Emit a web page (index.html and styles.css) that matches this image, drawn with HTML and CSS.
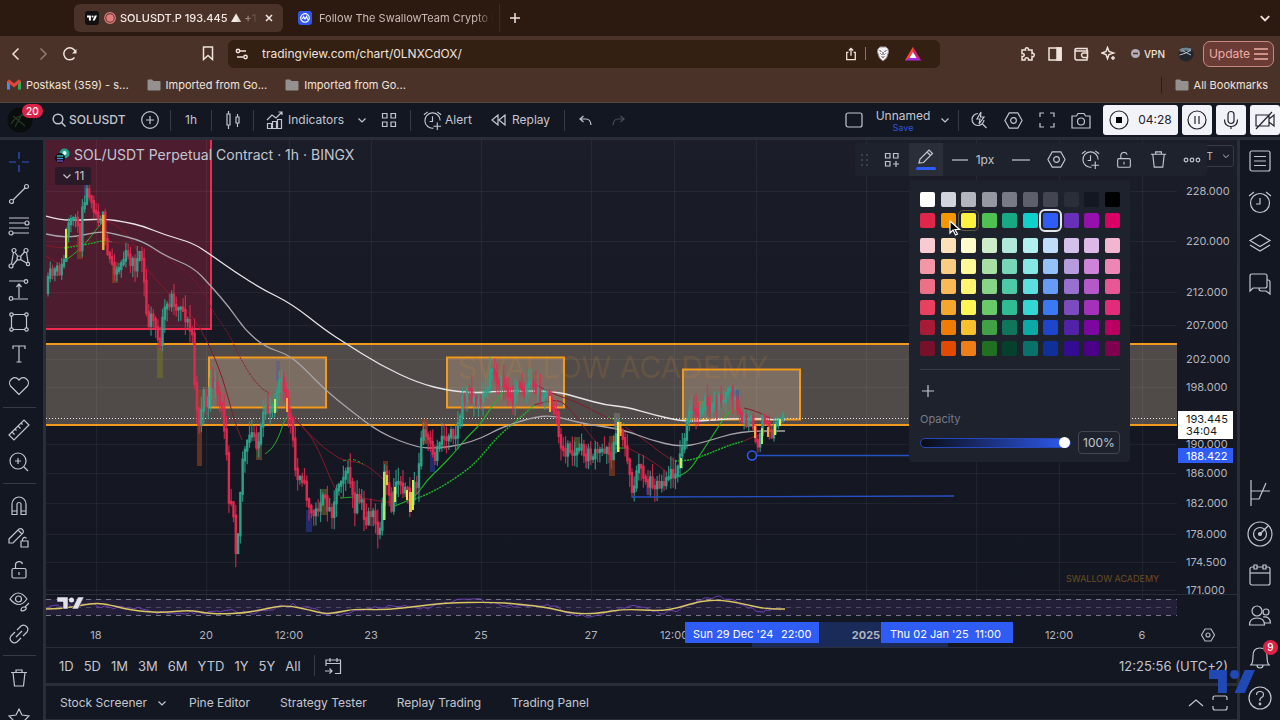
FILE: index.html
```html
<!DOCTYPE html>
<html lang="en">
<head>
<meta charset="utf-8">
<title>SOLUSDT.P 193.445</title>
<link rel="stylesheet" href="styles.css">
</head>
<body>
<svg class="defs" aria-hidden="true">
  <symbol id="chev" viewBox="0 0 10 10"><path d="M1.500 3.500 5 7l3.500-3.500"/></symbol>
  <symbol id="hex" viewBox="0 0 22 22"><path d="M6.500 3h9l4.500 8-4.500 8h-9L2 11z"/><circle cx="11" cy="11" r="3"/></symbol>
  <symbol id="trash" viewBox="0 0 22 22"><path d="M3 5.500h16M8 5.500V3h6v2.500M5 5.500 6.500 19h9L17 5.500"/></symbol>
  <symbol id="lock" viewBox="0 0 22 22"><rect x="4" y="9.500" width="14" height="9.500" rx="1.500"/><path d="M7.500 9.500V6c0-4 6-4.500 7-1M11 13v3"/></symbol>
  <symbol id="alarm" viewBox="0 0 22 22"><path d="M19 11a8 8 0 1 0-7 8M11 6.500V12H8M2 5l4-3M16 2l4 3M16 13v8M12 17h8"/></symbol>
  <symbol id="folder" viewBox="0 0 14 12"><path d="M.5 1.500q0-1 1-1h3.500l1.500 1.500h6q1 0 1 1v7.500q0 1-1 1h-11q-1 0-1-1z" fill="#93908f" stroke="none"/></symbol>
  <symbol id="tv" viewBox="0 0 36 18"><path d="M0 0h14v18H7V7H0zM28 0h8l-8 18h-8z"/><circle cx="20" cy="3.500" r="3.500"/></symbol>
</svg>

<header class="browser">
  <div class="tabs">
    <div class="tab active">
      <span class="fav tvfav"><svg class="solid" width="10" height="6"><use href="#tv"/></svg></span>
      <svg width="12" height="12" viewBox="0 0 12 12" class="rec"><circle cx="6" cy="6" r="5.300"/><circle cx="6" cy="6" r="3.200" fill="#e07c7c"/></svg>
      <span class="tabtext">SOLUSDT.P 193.445 ▲ +1</span>
      <button class="close" aria-label="Close tab"><svg width="8" height="8" viewBox="0 0 8 8"><path d="m1 1 6 6M7 1 1 7"/></svg></button>
    </div>
    <div class="tab">
      <span class="fav cmc"><svg width="10" height="10" viewBox="0 0 10 10"><path d="M9 6.500A4.300 4.300 0 1 1 9.300 5q0 2-1.200 1.500Q7 6 6.700 3.500L5 6 3.500 3.500 2.500 6"/></svg></span>
      <span class="tabtext">Follow The SwallowTeam Crypto N</span>
    </div>
    <button class="newtab" aria-label="New tab"><svg width="10" height="10" viewBox="0 0 10 10"><path d="M5 0v10M0 5h10"/></svg></button>
    <button class="tabmenu" aria-label="Search tabs"><svg width="12" height="12"><use href="#chev"/></svg></button>
  </div>
  <div class="nav">
    <button aria-label="Back"><svg width="14" height="14" viewBox="0 0 14 14"><path d="M9.500 1.500 4 7l5.500 5.500"/></svg></button>
    <button aria-label="Forward" class="dim"><svg width="14" height="14" viewBox="0 0 14 14"><path d="M4.500 1.500 10 7l-5.500 5.500"/></svg></button>
    <button aria-label="Reload"><svg width="16" height="16" viewBox="0 0 16 16"><path d="M12.500 11.500A6 6 0 1 1 13.500 6"/><path d="M14.500 3v4.500H10z" fill="currentColor" stroke="none"/></svg></button>
    <button aria-label="Bookmark" class="mark"><svg width="12" height="15" viewBox="0 0 12 15"><path d="M1.500 1h9v12.500L6 9.500l-4.500 4z"/></svg></button>
    <label class="url">
      <svg width="14" height="12" viewBox="0 0 14 12"><circle cx="3" cy="3" r="1.700"/><path d="M5 3h6M2 9h6"/><circle cx="10.500" cy="9" r="1.700"/></svg>
      <input type="text" value="tradingview.com/chart/0LNXCdOX/" aria-label="Address">
      <svg width="12" height="14" viewBox="0 0 14 16"><path d="M4 6H2v8.500h10V6h-2M7 10V1.500M4.500 4 7 1.500 9.500 4"/></svg>
      <i></i>
      <svg width="14" height="16" viewBox="0 0 14 16"><path d="m2 3 2-2h6l2 2 .5 3-2 6L7 15l-3.500-3-2-6z" fill="#f4f2f5" stroke="#99939a" stroke-width="1"/><path d="m3.500 4.500 2 1M10.500 4.500l-2 1M5.500 10.500l1.500 1 1.500-1M7 6v3M4.500 7.500l1 1M9.500 7.500l-1 1" stroke="#3a3040" stroke-width=".9"/></svg>
      <svg class="bat" width="18" height="16" viewBox="0 0 18 16"><path d="M9 1 1 14.500h16z" fill="#a52be0" stroke="none"/><path d="M9 1 1 14.500l4-2.500 4-6z" fill="#ff4a1c" stroke="none"/><path d="m9 1 8 13.500-4-2.500-4-6z" fill="#d22368" stroke="none"/><path d="m9 6-3.500 6h7z" fill="#fff" stroke="none"/></svg>
    </label>
    <button aria-label="Extensions" class="ext"><svg width="16" height="16" viewBox="0 0 16 16"><path d="M2 4h3.500C4.500 1 9 1 8.500 4H12v3.500c3-1 3 4 0 3V14H8.500c.5-3-4-3-3.500 0H2v-3.500c3 .5 3-3.500 0-3z"/></svg></button>
    <button aria-label="Sidebar"><svg width="14" height="14" viewBox="0 0 14 14"><path d="M1 1h12v12H1z"/><path d="M9 1h4v12H9z" fill="currentColor"/></svg></button>
    <button aria-label="Wallet"><svg width="15" height="14" viewBox="0 0 15 14"><path d="M13 4V1.500H3Q1 1.500 1 3v8q0 2 2 2h10v-2.500M1 4h12.500v6.500H9q-3-3 0-4.500h4.500"/></svg></button>
    <button aria-label="Assistant"><svg width="15" height="15" viewBox="0 0 15 15"><path d="M6.500 1.500 8 5.500l4.500 1.500L8 8.500l-1.500 4-1.500-4L1 7l4-1.500zM12 10v4M10 12h4"/></svg></button>
    <button class="vpn"><svg width="9" height="9" viewBox="0 0 9 9"><circle cx="4.500" cy="4.500" r="4.500" fill="#b4acb8" stroke="none"/><path d="M2 4.500h5" stroke="#4b3228"/></svg>VPN</button>
    <svg class="face" width="16" height="16" viewBox="0 0 16 16"><circle cx="8" cy="8" r="7.500" fill="#22252c" stroke="none"/><path d="M2 5q4-3.500 11-1" stroke="#6c8392" stroke-width="3"/><path d="M1.500 9q6-1 11.500-5M4 4.500l9 4.500" stroke="#b6c2ca" stroke-width="1"/></svg>
    <button class="update">Update <svg width="14" height="12" viewBox="0 0 14 12"><path d="M0 1h14M0 6h14M0 11h14"/></svg></button>
  </div>
  <div class="bookmarks">
    <a href="#"><svg width="14" height="11" viewBox="0 0 14 11"><path d="M1.500 10.500V2" stroke="#4c8bf5" stroke-width="3"/><path d="M12.500 10.500V2" stroke="#34a853" stroke-width="3"/><path d="m1 1.500 6 5 6-5" stroke="#ea4335" stroke-width="3"/></svg>Postkast (359) - s...</a>
    <a href="#"><svg width="14" height="12"><use href="#folder"/></svg>Imported from Go...</a>
    <a href="#"><svg width="14" height="12"><use href="#folder"/></svg>Imported from Go...</a>
    <a href="#" class="all"><svg width="14" height="12"><use href="#folder"/></svg>All Bookmarks</a>
  </div>
</header>

<div class="app">
  <div class="topbar">
    <button class="avatar" aria-label="Account, 20 notifications"><svg width="26" height="26" viewBox="0 0 26 26"><circle cx="13" cy="13" r="12.500" fill="#090d0c" stroke="none"/><path d="M4 17q5-9 16-9M6 9l12 10M8 20l7-13" stroke="#273c25"/></svg><b>20</b></button>
    <button class="symbol"><svg width="14" height="14" viewBox="0 0 14 14"><circle cx="6" cy="6" r="4.800"/><path d="m9.500 9.500 4 4"/></svg><span>SOLUSDT</span></button>
    <button class="w41" aria-label="Compare"><svg width="18" height="18" viewBox="0 0 18 18"><circle cx="9" cy="9" r="8.300"/><path d="M9 5v8M5 9h8"/></svg></button>
    <i class="sep"></i>
    <button class="w40">1h</button>
    <i class="sep"></i>
    <button class="w41" aria-label="Candles"><svg width="16" height="20" viewBox="0 0 16 20"><path d="M2 4h3v11H2zM3.500 1v3M3.500 15v4M11 7h3v6h-3zM12.500 4v3M12.500 13v4"/></svg></button>
    <i class="sep"></i>
    <button class="indicators"><svg width="18" height="18" viewBox="0 0 18 18"><path d="M1.500 17.500v-5h4v5zm5 0v-7h4v7zm5 0v-9h4v9zM1 9l5-5 4 3 6-6M12.500 1H16v3"/></svg>Indicators</button>
    <button class="w24" aria-label="Favorite indicators"><svg width="10" height="10"><use href="#chev"/></svg></button>
    <button class="w30" aria-label="Templates"><svg width="16" height="16" viewBox="0 0 16 16"><path d="M1.500 1.500h4.500v4.500H1.500zM10 1.500h4.500v4.500H10zM1.500 10h4.500v4.500H1.500zM10 10h4.500v4.500H10z"/></svg></button>
    <i class="sep gapsep"></i>
    <button class="alert"><svg width="21" height="21"><use href="#alarm"/></svg>Alert</button>
    <button class="replay"><svg width="15" height="12" viewBox="0 0 15 12"><path d="M7 1v10L1 6zM14 1v10L8 6z"/></svg>Replay</button>
    <i class="sep"></i>
    <button class="w41" aria-label="Undo"><svg width="13" height="11" viewBox="0 0 13 11"><path d="M4.500 1 1 4l3.500 3M1 4h6q4.500 0 5 6"/></svg></button>
    <button class="w24 faint" aria-label="Redo"><svg width="13" height="11" viewBox="0 0 13 11"><path d="M8.500 1 12 4 8.500 7M12 4H6Q1.500 4 1 10"/></svg></button>
    <div class="right">
      <button class="w34" aria-label="Layout"><svg width="18" height="16" viewBox="0 0 18 16"><rect x="1" y="1" width="16" height="14" rx="2"/></svg></button>
      <button class="layout"><span>Unnamed</span><small>Save</small></button>
      <button class="w20" aria-label="Layouts"><svg width="10" height="10"><use href="#chev"/></svg></button>
      <i class="sep m3"></i>
      <button class="w34" aria-label="Quick search"><svg width="18" height="18" viewBox="0 0 18 18"><path d="M8 2.500a6 6 0 1 0 6 6.500M12.500 13l4 4M11 1 7 8h3l-1 5 5-7h-3.500z"/></svg></button>
      <button class="w34" aria-label="Settings"><svg width="21" height="21"><use href="#hex"/></svg></button>
      <button class="w34" aria-label="Fullscreen"><svg width="16" height="16" viewBox="0 0 16 16"><path d="M1 5V1h4M11 1h4v4M15 11v4h-4M5 15H1v-4"/></svg></button>
      <button class="w34" aria-label="Snapshot"><svg width="20" height="17" viewBox="0 0 20 17"><path d="M1 4h4.500L7 1.500h6L14.500 4H19v12H1z"/><circle cx="10" cy="9.500" r="3.500"/></svg></button>
      <div class="recorder">
        <button class="r1"><svg width="20" height="20" viewBox="0 0 20 20"><circle cx="10" cy="10" r="9"/><path d="M7 7h6v6H7z" fill="#000" stroke="none"/></svg>04:28</button>
        <button class="r2" aria-label="Pause"><svg width="20" height="20" viewBox="0 0 20 20"><circle cx="10" cy="10" r="9"/><path d="M8 6v8M12 6v8"/></svg></button>
        <button class="r2" aria-label="Microphone"><svg width="18" height="20" viewBox="0 0 18 20"><rect x="6" y="1.500" width="6" height="12" rx="3"/><path d="M2.500 9.500q0 7 6.500 7t6.500-7M9 16.500V19"/></svg></button>
        <button class="r2" aria-label="Camera off"><svg width="20" height="20" viewBox="0 0 20 20"><path d="M1 5h13v11H1zM14 9l5-4v11l-5-4M1 19 17 2"/></svg></button>
      </div>
    </div>
  </div>

  <div class="main">
    <nav class="left" aria-label="Drawing tools">
      <button class="blue" aria-label="Cross"><svg width="22" height="22" viewBox="0 0 22 22"><path d="M11 1v7M11 14v7M1 11h7M14 11h7"/></svg></button>
      <button aria-label="Trend line"><svg width="22" height="22" viewBox="0 0 22 22"><circle cx="3.500" cy="18.500" r="2"/><circle cx="18.500" cy="3.500" r="2"/><path d="M5 17 17 5"/></svg></button>
      <button aria-label="Fibonacci"><svg width="22" height="22" viewBox="0 0 22 22"><path d="M1 3h20M1 8h16M1 13h20M5 18h16"/><circle cx="19" cy="8" r="2"/><circle cx="3" cy="18" r="2"/></svg></button>
      <button aria-label="Patterns"><svg width="22" height="22" viewBox="0 0 22 22"><path d="M3.500 17 5.500 5M7 5.500 10 9.500M12.500 9.500 16.500 5M18.500 5.500 20 15M5 18l4.500-5.500M12.500 12.500 18.500 16"/><circle cx="3" cy="19" r="2"/><circle cx="6" cy="3.500" r="2"/><circle cx="11" cy="11" r="2"/><circle cx="18" cy="3.500" r="2"/><circle cx="20" cy="17" r="1.700"/></svg></button>
      <button aria-label="Prediction"><svg width="22" height="22" viewBox="0 0 22 22"><path d="M1 2h15M5 20h15M11 19V5M8.500 8 11 5l2.500 3"/><circle cx="18" cy="2.500" r="1.800"/><circle cx="3" cy="19.500" r="1.800"/></svg></button>
      <button aria-label="Shapes"><svg width="22" height="22" viewBox="0 0 22 22"><path d="M3.500 5v12M18.500 5v12M5 3.500h12M5 18.500h12"/><circle cx="3.500" cy="3.500" r="1.700"/><circle cx="18.500" cy="3.500" r="1.700"/><circle cx="3.500" cy="18.500" r="1.700"/><circle cx="18.500" cy="18.500" r="1.700"/></svg></button>
      <button aria-label="Text"><svg width="22" height="22" viewBox="0 0 22 22"><path d="M5 6V3h12v3M11 3v16M8.500 19h5"/></svg></button>
      <button aria-label="Icons"><svg width="22" height="22" viewBox="0 0 22 22"><path d="M11 19.500 2.500 11C-1 6 6-.5 11 5c5-5.500 12 1 8.500 6z"/></svg></button>
      <i></i>
      <button aria-label="Measure"><svg width="22" height="22" viewBox="0 0 22 22"><path d="M1 16 16 1l5 5L6 21zM4 13l2.500 2.500M7 10l1.500 1.500M10 7l2.500 2.500M13 4l1.500 1.500"/></svg></button>
      <button aria-label="Zoom in"><svg width="22" height="22" viewBox="0 0 22 22"><circle cx="10" cy="10" r="8"/><path d="m16 16 4 4M10 7v6M7 10h6"/></svg></button>
      <i></i>
      <button aria-label="Magnet"><svg width="22" height="22" viewBox="0 0 22 22"><path d="M4 19.500V9a7 7 0 0 1 14 0v10.500h-5V9.500a2 2 0 0 0-4 0v10zM4 16h5M13 16h5"/></svg></button>
      <button aria-label="Stay in drawing mode"><svg width="22" height="22" viewBox="0 0 22 22"><path d="m1 12 10-10q2-1 3.500.5T15 6L5 16H1zM10 3l4 4M13 14h7v6h-7zM14.500 14v-2q2-3 4-.500"/></svg></button>
      <button aria-label="Lock drawings"><svg width="22" height="22"><use href="#lock"/></svg></button>
      <button aria-label="Hide drawings"><svg width="22" height="22" viewBox="0 0 22 22"><path d="M2 8q8-12 17 0-8 11-17 0zM13 20q0-4 3-4t2 2-5 2M17 16l4-4"/><circle cx="10.500" cy="8" r="3"/></svg></button>
      <button aria-label="Sync"><svg width="22" height="22" viewBox="0 0 22 22"><path d="m9 7 4-4q3-2 5.500.5T19 9l-4 4M13 15l-4 4q-3 2-5.500-.5T3 13l4-4M8 14l6-6"/></svg></button>
      <i></i>
      <button aria-label="Remove"><svg width="22" height="22"><use href="#trash"/></svg></button>
      <button class="star" aria-label="Favorites"><svg width="22" height="22" viewBox="0 0 22 22"><path d="m11 2 3 6 7 1-5 5 1 7-6-3-6 3 1-7-5-5 7-1z"/></svg></button>
    </nav>

    <main class="center">
      <section class="chartbox">
        <svg id="chart" viewBox="46 140 1191 507" preserveAspectRatio="none" role="img" aria-label="SOL/USDT price chart"></svg>
        <button class="currency">USDT <svg width="8" height="8"><use href="#chev"/></svg></button>
        <div class="legend">
          <h1><svg width="15" height="15" viewBox="0 0 15 15"><circle cx="9.500" cy="5.500" r="5" fill="#25a28b" stroke="none"/><circle cx="9.500" cy="5" r="2" fill="#e5fff7" stroke="none"/><circle cx="5" cy="10" r="5" fill="#11131d" stroke="none"/><path d="M2 8h6" stroke="#38d5b8"/><path d="M2 10.500h6" stroke="#4b8fe8"/><path d="M2 13h6" stroke="#8350d9"/></svg>SOL/USDT Perpetual Contract · 1h · BINGX</h1>
          <button><svg width="10" height="10"><use href="#chev"/></svg>11</button>
        </div>
        <div class="floatbar">
          <svg class="grip" width="10" height="14" viewBox="0 0 10 14"><path d="M1 2h2M6 2h2M1 7h2M6 7h2M1 12h2M6 12h2"/></svg>
          <button class="w34" aria-label="Templates"><svg width="16" height="16" viewBox="0 0 16 16"><path d="M1.500 1.500h4.500v4.500H1.500zM9.500 1.500H14v4.500H9.500zM1.500 9.500h4.500V14H1.500zM12 9v6M9 12h6"/></svg></button>
          <button class="w34 pen" aria-label="Line color"><svg width="18" height="16" viewBox="0 0 18 16"><path d="m2 14 1-4 9-9 3.500 3.500-9 9zM10 3l3.500 3.500"/></svg><b></b></button>
          <button class="px"><svg width="16" height="4" viewBox="0 0 16 4"><path d="M0 2h16"/></svg>1px</button>
          <button class="linestyle" aria-label="Line style"><svg width="18" height="4" viewBox="0 0 18 4"><path d="M0 2h18"/></svg></button>
          <button class="w34" aria-label="Settings"><svg width="21" height="21"><use href="#hex"/></svg></button>
          <button class="w34" aria-label="Add alert"><svg width="21" height="21"><use href="#alarm"/></svg></button>
          <button class="w34" aria-label="Lock"><svg width="20" height="20"><use href="#lock"/></svg></button>
          <button class="w34" aria-label="Remove"><svg width="21" height="21"><use href="#trash"/></svg></button>
          <button class="w34" aria-label="More"><svg width="18" height="6" viewBox="0 0 18 6"><circle cx="3" cy="3" r="1.800"/><circle cx="9" cy="3" r="1.800"/><circle cx="15" cy="3" r="1.800"/></svg></button>
        </div>
        <div class="picker">
          <div class="swatches two" id="base"></div>
          <div class="swatches six" id="shades"></div>
          <hr>
          <button class="add" aria-label="Add custom color"><svg width="12" height="12" viewBox="0 0 12 12"><path d="M6 0v12M0 6h12"/></svg></button>
          <label for="opacity">Opacity</label>
          <div class="oprow"><input type="range" id="opacity" value="100"><input type="text" value="100%" aria-label="Opacity percent"></div>
          <svg class="cursor" width="12" height="16" viewBox="0 0 12 16"><path d="M1 1v12l3-3 2.500 5 2-1L6 9.500h4.500z" fill="#000" stroke="#fff"/></svg>
        </div>
      </section>
      <section class="ranges">
        <button>1D</button><button>5D</button><button>1M</button><button>3M</button><button>6M</button><button>YTD</button><button>1Y</button><button>5Y</button><button>All</button>
        <i class="sep"></i>
        <button aria-label="Go to date"><svg width="18" height="18" viewBox="0 0 18 18"><path d="M2 9V3h14.500v13.500H11M2 6.500h14.500M6 1v4M13 1v4M1 14h7M5.500 11.500 8 14l-2.500 2.500"/></svg></button>
        <time>12:25:56 (UTC+2)</time>
      </section>
      <section class="panels">
        <button>Stock Screener <svg width="10" height="10"><use href="#chev"/></svg></button>
        <button>Pine Editor</button><button>Strategy Tester</button><button>Replay Trading</button><button>Trading Panel</button>
        <div class="panelctl">
          <button aria-label="Open panel"><svg width="16" height="8" viewBox="0 0 16 8"><path d="m1 7 7-6 7 6"/></svg></button>
          <button aria-label="Maximize panel"><svg width="16" height="16" viewBox="0 0 16 16"><path d="M1 5V3q0-2 2-2h2M11 1h2q2 0 2 2v2M15 11v2q0 2-2 2h-2M5 15H3q-2 0-2-2v-2M5 1h6M5 15h6"/></svg></button>
        </div>
      </section>
    </main>

    <aside class="side" aria-label="Widgets">
      <button aria-label="Watchlist"><svg width="24" height="24" viewBox="0 0 24 24"><rect x="2" y="2" width="20" height="20" rx="2"/><path d="M6 7.500h12M6 12h12M6 16.500h12"/></svg></button>
      <button aria-label="Alerts"><svg width="24" height="24" viewBox="0 0 24 24"><circle cx="12" cy="13" r="9.500"/><path d="M12 8v6H8M1 6l5-4M18 2l5 4"/></svg></button>
      <button aria-label="Object tree"><svg width="24" height="24" viewBox="0 0 24 24"><path d="m2 9.500 10-6 10 6-10 6zM2 14l10 6 10-6"/></svg></button>
      <button aria-label="Chats"><svg width="24" height="24" viewBox="0 0 24 24"><path d="M2 19V4q0-2 2-2h13q2 0 2 2v10q0 2-2 2H5zM19 8h1q2 0 2 2v12l-4-3h-5q-2 0-2-3"/></svg></button>
      <button class="push" aria-label="DOM"><svg width="24" height="28" viewBox="0 0 24 28"><path d="M3 1v26M3 12h19M3 20h8l7-16"/></svg></button>
      <button aria-label="Streams"><svg width="26" height="26" viewBox="0 0 26 26"><circle cx="13" cy="13" r="12"/><circle cx="13" cy="13" r="6.500"/><circle cx="13" cy="13" r="1.500" fill="currentColor"/><path d="m13 13 8-8"/></svg></button>
      <button aria-label="Calendar"><svg width="24" height="24" viewBox="0 0 24 24"><rect x="2" y="4" width="20" height="18" rx="2"/><path d="M2 10h20" /><path d="M6 2h3v4H6zM15 2h3v4h-3z" fill="#131722"/></svg></button>
      <button aria-label="Community"><svg width="24" height="24" viewBox="0 0 24 24"><circle cx="9" cy="7" r="5"/><path d="M1.500 21q0-7 7.500-7t7.500 7zM15 13q7-1 7.500 6H17"/><circle cx="18" cy="8" r="3"/></svg></button>
      <button class="bell" aria-label="Notifications, 9 new"><svg width="24" height="24" viewBox="0 0 24 24"><path d="M3 20q2-2 2-9 0-8 7-8t7 8q0 7 2 9zM2 20h20M9 20q0 3 3 3t3-3"/></svg><b>9</b></button>
      <button aria-label="Help"><svg width="24" height="24" viewBox="0 0 24 24"><circle cx="12" cy="12" r="11"/><path d="M8.500 9q0-3.500 3.500-3.500t3.500 3q0 2-2 3T12 15"/><circle cx="12" cy="18" r=".8"/></svg></button>
    </aside>
  </div>
  <svg class="brand" width="46" height="23"><use href="#tv"/></svg>
</div>
<script src="chart.js"></script>
</body>
</html>
```
FILE: styles.css
```css
* { box-sizing: border-box; }
body {
  margin: 0;
  height: 100vh;
  display: flex;
  flex-direction: column;
  overflow: hidden;
  background: #2a2e39;
  color: #c3c6d0;
  font: 12px/16px Inter, "Liberation Sans", sans-serif;
}
svg { fill: none; stroke: currentColor; stroke-width: 1.2; flex: none; }
.defs { position: absolute; width: 0; height: 0; }
.solid, .brand { fill: currentColor; stroke: none; }
button {
  border: 0;
  padding: 0;
  background: none;
  color: inherit;
  font: inherit;
  display: flex;
  align-items: center;
  justify-content: center;
  white-space: nowrap;
  flex: none;
}
input { font: inherit; color: inherit; border: 0; background: none; padding: 0; min-width: 0; }

/* Browser chrome */
.browser { background: #4b3228; color: #efe3dc; border-bottom: 1px solid #57463b; flex: none; }
.browser svg { stroke-width: 1.5; }
.tabs { display: flex; align-items: center; height: 36px; background: #2c1a10; padding-left: 74px; }
.tab { display: flex; align-items: center; height: 28px; padding-left: 14px; gap: 7px; color: #c9bbb3; font-size: 11px; width: 209px; }
.tab:not(.active) { margin-left: 1px; width: 216px; border-right: 1px solid #3d2a20; }
.tab.active { background: #4b3228; border-radius: 6px; padding-left: 11px; gap: 3px; color: #f3eae5; padding-right: 6px; font-weight: 500; }
.tabtext { flex: 1; overflow: hidden; white-space: nowrap; mask-image: linear-gradient(90deg, #000 84%, transparent); }
.tab:not(.active) .tabtext { margin-right: 2px; mask-image: linear-gradient(90deg, #000 88%, transparent 98%); }
.fav { width: 14px; height: 14px; border-radius: 3px; display: flex; align-items: center; justify-content: center; flex: none; }
.tvfav { background: #111; color: #fff; }
.tvfav svg { stroke: none; }
.rec { color: #e07c7c; margin: 0 1px 0 2px; }
.browser .rec { stroke-width: 1.2; }
.cmc { background: #3055f0; color: #fff; }
.browser .cmc svg { stroke-width: 1.2; }
.close { width: 16px; height: 16px; }
.newtab { width: 30px; height: 28px; }
.tabmenu { margin-left: auto; width: 30px; height: 28px; }
.nav { display: flex; align-items: center; height: 35px; padding: 0 6px 0 2px; }
.nav > button { width: 27px; height: 27px; }
.nav .dim { color: #927a6e; }
.nav .mark { margin-left: 111px; }
.url { flex: 1; display: flex; align-items: center; height: 28px; border-radius: 6px; background: #341f13; margin: 0 74px 0 7px; padding: 0 18px 0 7px; font-size: 12px; }
.url input { flex: 1; margin-left: 13px; }
.url i { width: 1px; height: 13px; background: #85756c; margin: 0 10px 0 8px; }
.url .bat { margin-left: 14px; }
.nav > .vpn { width: 42px; margin-left: 5px; gap: 4px; font-size: 10px; font-weight: 500; }
.face { margin: 0 9px; }
.nav > .update { width: 71px; height: 26px; border: 1px solid #c88a80; border-radius: 7px; background: #6b3c35; color: #f0aca4; gap: 4px; }
.bookmarks { display: flex; align-items: center; height: 31px; padding: 0 12px 4px 7px; gap: 18px; }
.bookmarks a { display: flex; align-items: center; gap: 5px; color: inherit; text-decoration: none; font-size: 11px; }
.bookmarks .all { margin-left: auto; border-left: 1px solid #2e1a11; padding-left: 13px; }

/* Application shell */
.app { flex: 1; min-height: 0; display: flex; flex-direction: column; gap: 3px; }
.topbar { display: flex; align-items: center; height: 34px; background: #131722; flex: none; }
.topbar button { height: 34px; }
.sep { width: 1px; height: 21px; background: #363a45; flex: none; }
.gapsep { margin-left: 6px; }
.m3 { margin: 0 3px; }
.w20 { width: 20px; } .w24 { width: 24px; } .w30 { width: 30px; } .w34 { width: 34px; } .w40 { width: 40px; } .w41 { width: 41px; }
.avatar { position: relative; width: 43px; padding-right: 4px; }
.avatar b, .bell b { position: absolute; background: #dc2347; color: #fff; border-radius: 8px; font-size: 10px; font-weight: 500; line-height: 14px; }
.avatar b { top: 1px; left: 22px; padding: 0 4px; }
.symbol { width: 86px; padding-left: 9px; gap: 3px; justify-content: flex-start; font-weight: 500; }
.symbol svg { stroke-width: 1.5; }
.indicators { width: 96px; padding-left: 12px; gap: 4px; justify-content: flex-start; }
.alert { width: 69px; padding-left: 11px; gap: 2px; justify-content: flex-start; }
.replay { width: 84px; padding-left: 11px; gap: 6px; justify-content: flex-start; }
.faint { opacity: .3; }
.right { margin-left: auto; display: flex; align-items: center; }
.layout { width: 64px; flex-direction: column; }
.layout span { line-height: 14px; }
.layout small { font-size: 9px; line-height: 9px; color: #2f56d8; }
.recorder { display: flex; gap: 4px; margin-left: 5px; color: #20222a; }
.recorder button { height: 30px; background: #f2f2f9; border-radius: 3px; }
.recorder .r1 { width: 75px; gap: 9px; }
.recorder .r2 { width: 30px; }
.main { flex: 1; min-height: 0; display: flex; gap: 3px; }
.left { width: 43px; background: #131722; padding: 6px 5px 0 0; flex: none; overflow: hidden; }
.left button { width: 38px; height: 32px; }
.left i { display: block; height: 1px; margin: 5px 2px 6px 3px; background: #363a45; }
.left .star { margin-top: 8px; }
.blue { color: #2f56d8; }
.center { flex: 1; min-width: 0; display: flex; flex-direction: column; }
.side { width: 40px; background: #131722; display: flex; flex-direction: column; flex: none; padding-bottom: 2px; }
.side button { height: 41px; }
.side .push { margin-top: auto; }
.bell { position: relative; }
.bell b { top: 4px; right: 2px; width: 15px; line-height: 15px; }

/* Chart and its overlays */
.chartbox { flex: 1; min-height: 0; position: relative; background: #131722; }
#chart { display: block; width: 100%; height: 100%; }
#chart text { stroke: none; fill: #b2b5be; font-size: 11px; }
#chart .mid { text-anchor: middle; }
#chart .strong { font-weight: 700; }
#chart .dark { fill: #131722; }
#chart .white { fill: #fff; }
#chart .mark { fill: #6d4d1e; font-size: 9px; }
#chart .bigmark { fill: #f7931a; opacity: .12; font-size: 30px; }
.currency { position: absolute; right: 3px; top: 5px; width: 58px; height: 22px; padding-right: 3px; border: 1px solid #363a45; border-radius: 3px; gap: 9px; font-size: 10px; justify-content: flex-end; }
.legend { position: absolute; left: 9px; top: 6px; }
.legend h1 { display: flex; align-items: center; gap: 4px; margin: 0; font-size: 14px; line-height: 18px; font-weight: 400; }
.legend button { margin-top: 3px; height: 18px; width: 36px; gap: 3px; background: #2a1a28; border-radius: 2px; }
.floatbar { position: absolute; right: 30px; top: 3px; height: 33px; width: 352px; background: #1e222d; border-radius: 4px; display: flex; align-items: center; }
.floatbar button { height: 33px; }
.grip { margin: 0 5px; color: #5d606b; }
.pen { flex-direction: column; gap: 2px; background: #2a2e39; }
.pen b { width: 20px; height: 3px; border-radius: 2px; background: #2f5cf4; }
.px { width: 60px; gap: 8px; }
.linestyle { width: 36px; }
.picker { position: absolute; right: 107px; top: 40px; width: 221px; padding: 12px 10px 8px 11px; background: #1e222d; border-radius: 4px; }
.swatches { display: grid; grid-template-columns: repeat(10, 15px); justify-content: space-between; align-content: space-between; }
.two { height: 36px; margin-bottom: 10px; }
.six { height: 118px; }
.swatches button { width: 15px; height: 15px; border-radius: 2px; }
.swatches .near { outline: 1px solid #5a5a3c; outline-offset: 2px; }
.swatches .on { outline: 2px solid #e4e6ee; outline-offset: 2px; border-radius: 2px; }
.picker hr { border: 0; height: 1px; background: #363a45; margin: 13px 0; }
.add { width: 15px; height: 16px; }
.picker label { display: block; margin: 12px 0 4px; font-size: 11px; color: #787b86; }
.oprow { display: flex; align-items: center; justify-content: space-between; }
.oprow input[type="text"] { width: 42px; height: 23px; border: 1px solid #434651; border-radius: 4px; text-align: center; }
.oprow input[type="range"] { appearance: none; width: 151px; height: 10px; margin: 0; border-radius: 5px; border: 1px solid #2748b8; background: linear-gradient(90deg, #0a0c12, #2f5cf4), #131722; }
input[type="range"]::-webkit-slider-thumb { appearance: none; width: 11px; height: 11px; border-radius: 50%; background: #fff; }
.cursor { position: absolute; left: 40px; top: 40px; }

/* Bottom bars */
.ranges { display: flex; align-items: center; height: 36px; gap: 10px; padding: 0 9px 0 13px; background: #131722; border-top: 1px solid #2a2e39; font-size: 13px; }
.ranges .sep { margin: 0 -1px 0 3px; }
.ranges time { margin-left: auto; }
.panels { display: flex; align-items: center; height: 33px; margin: 3px 0 1px; padding: 0 9px 0 14px; gap: 30px; background: #131722; }
.panels button { gap: 10px; }
.panels button:first-child { margin-right: -8px; }
.panelctl { display: flex; gap: 16px; margin-left: auto; }
.brand { position: absolute; right: 25px; bottom: 27px; color: #2149b4; }
```
FILE: chart.js
```js
const el = document.getElementById('chart');
const out = [];
const add = s => out.push(s);
const line = (x1, y1, x2, y2, c, w = 1, extra = '') =>
  add(`<path d="M${x1} ${y1}L${x2} ${y2}" stroke="${c}" stroke-width="${w}" ${extra}/>`);
const rect = (x, y, w, h, fill, stroke = 'none', sw = 0, op = 1) =>
  add(`<rect x="${x}" y="${y}" width="${w}" height="${h}" fill="${fill}" stroke="${stroke}" stroke-width="${sw}" opacity="${op}"/>`);
const curve = (p, c, w = 1, dash = '') => {
  let d = `M${p[0]} ${p[1]}`;
  for (let i = 2; i < p.length - 2; i += 2) {
    d += `Q${p[i]} ${p[i + 1]} ${(p[i] + p[i + 2]) / 2} ${(p[i + 1] + p[i + 3]) / 2}`;
  }
  d += `L${p[p.length - 2]} ${p[p.length - 1]}`;
  add(`<path d="${d}" stroke="${c}" stroke-width="${w}" stroke-dasharray="${dash}"/>`);
};
let seed = 11;
const rnd = () => (seed = (seed * 16807) % 2147483647) / 2147483647;

// Background, grid and zones
add('<defs><linearGradient id="bg" x2="0" y2="1"><stop stop-color="#1b1e29"/><stop offset=".5" stop-color="#151823"/><stop offset="1" stop-color="#131722"/></linearGradient></defs>');
rect(46, 140, 1191, 507, 'url(#bg)');
rect(40, 130, 171, 199, '#4d1c2e', '#f0294f', 2);
rect(40, 344, 1150, 81, '#504b49', '#f39a1c', 2);
rect(1177, 340, 60, 90, '#161924');
for (const x of [208, 446]) rect(x + 1, 357.5, 117, 50, '#7b6d61', '#f39a1c', 2);
rect(683, 369.5, 117, 50, '#7b6d61', '#f39a1c', 2);
const gx = [96.5, 206.5, 289.5, 371.5, 481.5, 591.5, 674.5, 756.5, 866.5, 976.5, 1059.5, 1142.5];
for (const x of gx) line(x, 140, x, 618, '#fff', 1, 'opacity=".055"');
const prices = { '228.000': 191, '220.000': 241, '212.000': 292, '207.000': 325, '202.000': 359, '198.000': 387, '190.000': 444, '186.000': 473, '182.000': 503, '178.000': 534, '174.500': 562, '171.000': 590 };
for (const y of Object.values(prices)) line(46, y + .5, 1177, y + .5, '#fff', 1, 'opacity=".05"');
add('<text x="458" y="378" class="bigmark">SWALLOW ACADEMY</text>');
line(46, 418.5, 1177, 418.5, '#e8e8ec', 1, 'stroke-dasharray="1 2"');

// Moving averages
const red = '#86192b', green = '#21b127';
curve([46,245,60,250,90,240], red);
curve([46,256,56,262,66,268], red);
curve([106,220,125,229,140,255,150,274,170,294,192,315,208,342,223,378,234,420,242,440], red);
curve([112,242,135,246,160,252,185,270,203,290,213,312,228,332,240,358,256,384,270,394], red, 1, '2 1');
curve([66,260,80,250,92,235,104,220], green);
curve([64,248,85,245,105,240,112,242], green, 1.3, '2 1');
curve([265,454,272,450,280,434,285,418,291,415], green);
curve([290,415,305,428,318,448,334,488,343,499], red);
curve([290,413,312,438,335,456,345,461,365,463,384,480], red);
curve([343,461,352,458,363,464], green, 1, '3 2');
curve([340,498,352,497,361,497], green);
curve([361,498,380,501,395,503], red);
curve([395,506,405,502,416,496,427,480,440,468,455,452,467,437,480,425,492,406,504,391], green, 1.2);
curve([412,500,430,494,465,472,480,458,498,436,520,418,534,405], green, 1.5, '2 1');
curve([534,405,555,398,568,406,590,435,604,452], red);
curve([535,384,552,394,575,401,600,414,612,420], red);
curve([608,417,625,424], green, 1, '2 2');
curve([625,427,645,440,662,454,674,461], red);
curve([615,448,628,448], green);
curve([628,448,645,456,667,472], red);
curve([674,478,687,474,700,455,715,432,728,412,737,408], green, 1.2);
curve([675,461,690,461,710,453,730,445,744,441], green, 1.5, '2 1');
curve([744,441,755,436,775,428], red);
curve([744,408,757,411,770,419,785,420], red);
curve([46,234,66,239,100,231,115,234,143,241,165,256,193,267,210,285,230,308,245,330,265,347,287,354,303,367,325,390,350,410,380,433,418,448,440,448,460,445,482,438,500,428,530,418,552,415,580,423,625,430,650,440,680,447,702,443,740,431,785,431], '#a9a4a9', 1.3);
curve([46,216,60,220,80,220,106,219,125,222,143,226,165,235,193,243,211,255,235,272,262,289,292,304,325,330,345,343,380,365,418,383,450,391,478,393,500,391,555,391,580,398,605,405,627,407,655,415,680,421,700,421,740,418,785,420], '#e9e5e7', 1.3);

// Bars highlighted behind the candles
const tinted = [[77,236,6,23,'#96421f'],[112,262,6,21,'#96421f'],[157,348,6,30,'#707028'],[197,390,5,76,'#96421f'],[256,432,6,28,'#7b5a2b'],[306,510,6,22,'#29389a'],[321,489,6,26,'#6b6828'],[383,461,5,14,'#96421f'],[422,419,6,25,'#96421f'],[430,450,5,22,'#243a9d'],[574,437,6,17,'#607133'],[585,446,5,22,'#243a9d'],[609,436,6,40,'#96421f'],[614,413,6,16,'#7b7872'],[646,486,6,9,'#40308d'],[698,401,6,14,'#a67a33'],[734,390,5,10,'#3755a2'],[84,183,4,15,'#3755a2'],[276,361,4,20,'#5b5b93']];
for (const [x, y, w, h, c] of tinted) rect(x, y, w, h, c, 'none', 0, .6);

// Hourly candles: x and close of each turning point
const k = [46,291,50,275,55,272,62,268,65,255,67,228,70,226,73,222,74,200,77,225,80,245,82,205,86,193,90,190,93,203,97,215,103,218,106,252,112,262,116,270,120,265,126,255,131,260,135,265,139,258,143,258,145,300,148,325,152,315,155,325,158,335,160,350,162,325,165,310,170,300,173,295,176,310,180,302,185,315,190,330,193,335,195,395,198,425,201,410,204,390,207,410,210,385,214,380,218,400,223,415,226,440,228,465,229,500,233,500,235,545,237,548,240,500,242,460,246,450,250,435,254,435,258,445,261,430,264,413,268,410,272,405,276,396,280,370,282,380,285,400,288,410,292,425,294,460,297,480,301,470,304,485,308,500,312,515,316,512,320,500,324,500,328,505,331,515,334,500,338,485,342,475,346,470,349,475,352,485,354,520,357,500,361,500,365,525,369,510,373,515,377,530,380,535,382,515,384,474,387,485,391,510,393,500,395,480,400,480,405,490,408,495,411,505,414,485,418,480,421,440,424,430,427,440,430,445,433,458,436,455,439,440,443,435,447,440,451,425,455,438,459,420,462,405,465,395,468,389,471,395,475,400,479,405,482,392,486,395,489,380,492,367,495,375,499,380,505,385,510,400,514,395,520,382,524,390,530,380,535,390,541,395,546,392,549,400,553,408,557,415,560,450,564,452,568,448,575,455,580,445,583,455,590,455,596,455,602,450,608,445,612,460,616,430,618,425,620,435,624,440,628,460,631,485,633,490,636,475,640,465,644,475,648,483,652,480,658,485,663,480,668,475,673,473,678,465,681,455,684,440,687,425,690,410,694,412,698,415,702,405,705,400,709,412,713,408,717,403,720,400,724,395,728,394,732,393,735,400,738,410,742,420,747,420,751,422,754,432,758,445,760,430,764,415,768,430,772,440,775,425,779,420,786,418];
const priceAt = x => {
  let i = 0;
  while (i < k.length - 4 && k[i + 2] < x) i += 2;
  const t = Math.min(1, Math.max(0, (x - k[i]) / (k[i + 2] - k[i])));
  return k[i + 1] + (k[i + 3] - k[i + 1]) * t;
};
let prev = 292;
for (let x = 48; x < 785; x += 2.29) {
  const y = priceAt(x) + (rnd() - .5) * 12;
  const c = y < prev ? '#2fa188' : '#e02950';
  const top = Math.min(y, prev) - 1, bottom = Math.max(y, prev) + 2;
  const spread = x > 740 || x < 130 ? 8 : 14;
  line(x, top - rnd() * spread, x, bottom + rnd() * spread, c, 1.2, 'opacity=".85"');
  rect(x - 1.2, top, 2.4, bottom - top, c);
  prev = y;
}
const marked = [[65,229,2,29,'#d5e94c'],[102,215,2.5,35,'#f6a83b'],[274,399,2,14,'#c8e65c'],[286,398,2,14,'#f6a83b'],[383,472,2.5,48,'#a9e66b'],[386,475,2,10,'#f6c23b'],[394,487,2,15,'#d5e94c'],[406,490,2,10,'#f2e34a'],[409,492,3,20,'#f6b83b'],[412,480,2,30,'#d5e94c'],[549,396,2,16,'#f6a83b'],[617,422,2.5,30,'#ecec55'],[620,422,1.5,14,'#f6a83b'],[680,458,2,10,'#d5e94c'],[754,426,2,12,'#f6a83b'],[761,428,2,16,'#a9e66b'],[767,427,2,10,'#f6a83b'],[774,424,2,11,'#d5e94c'],[779,419,2,7,'#f2e34a']];
for (const m of marked) rect(...m);

// Drawn levels
line(632, 497, 954, 496, '#2750c4', 1.3);
line(757, 455.5, 977, 455.5, '#2750c4', 1.3);
add('<circle cx="752" cy="455.500" r="4.500" stroke="#2f5cf4" stroke-width="1.500" fill="#131722"/>');
add('<text x="1066" y="582" class="mark">SWALLOW ACADEMY</text>');

// Oscillator pane
line(46, 594.5, 1237, 594.5, '#2a2e39');
rect(46, 599, 1131, 16, '#241f38');
for (const y of [599.5, 607.5, 615.5]) line(46, y, 1177, y, y === 607.5 ? '#4f4a62' : '#77758a', 1, 'stroke-dasharray="5 5"');
const osc = [46,609,60,609,83,605,97,603,110,605,130,610,160,613,190,610,205,613,220,614,245,613,265,609,285,605,310,610,325,614,340,612,355,609,385,610,420,606,445,603,490,602,520,604,550,608,565,612,583,614,600,613,625,609,660,611,678,608,700,601,720,600,740,603,765,609,785,609];
const wave = [];
for (let i = 0; i < osc.length - 2; i += 2) {
  for (let x = osc[i]; x < osc[i + 2]; x += 4) {
    const t = (x - osc[i]) / (osc[i + 2] - osc[i]);
    wave.push(x, osc[i + 1] + (osc[i + 3] - osc[i + 1]) * t + Math.sin(x / 13) * 2.5 + (rnd() - .5) * 4);
  }
}
add(`<polyline points="${wave.join(' ')}" stroke="#6a3fb0" stroke-width="1"/>`);
curve(osc, '#d9c763', 1.4);
add('<g transform="translate(57 597)"><path d="M0 0h11v12H6V5H0zM21 0h6l-6 12h-6z" fill="#e0e1ea" stroke="#131722" stroke-width=".5"/><circle cx="14.500" cy="3" r="2.500" fill="#e0e1ea" stroke="none"/></g>');

// Price axis
for (const [t, y] of Object.entries(prices)) add(`<text x="1186" y="${y + 4}">${t}</text>`);
rect(1178, 411, 55, 28, '#fff');
rect(1178, 448, 55, 15, '#2f5cf4');
add('<text x="1186" y="423" class="dark">193.445</text><text x="1186" y="435" class="dark">34:04</text><text x="1186" y="460" class="white">188.422</text>');

// Time axis
const times = [[96,'18'],[206,'20'],[289,'12:00'],[371,'23'],[481,'25'],[591,'27'],[674,'12:00'],[1059,'12:00'],[1142,'6']];
rect(752, 622, 196, 25, '#1a2b59');
for (const [x, t] of times) add(`<text x="${x}" y="639" class="mid">${t}</text>`);
add('<text x="866" y="639" class="mid strong">2025</text>');
rect(685, 622, 134, 21, '#2f5cf4');
rect(881, 622, 132, 21, '#2f5cf4');
add('<text x="693" y="638" class="white">Sun 29 Dec \'24</text><text x="781" y="638" class="white">22:00</text>');
add('<text x="890" y="638" class="white">Thu 02 Jan \'25</text><text x="975" y="638" class="white">11:00</text>');
add('<path d="M1205 629h6l3.500 6-3.500 6h-6l-3.500-6z" stroke="#b2b5be"/><circle cx="1208" cy="635" r="2" stroke="#b2b5be"/>');
el.innerHTML = out.join('');

// Colour picker
const base = ['#fff,#d1d4dc,#b2b5be,#9598a1,#787b86,#5d606b,#434651,#2a2e39,#131722,#000', '#e0264a,#f39800,#fff240,#4fc150,#17a982,#10d0cc,#2f5cf4,#6730b7,#9510ac,#db0065'];
const shades = ['#f8cbd3,#fce0b8,#fffccb,#cdedc9,#b0e8d9,#b2f0ef,#bfdcf9,#d3c1e9,#deb9e8,#f4b5d1', '#f397a6,#f9cb83,#fff998,#a8dfa5,#78d6b8,#85e8e5,#94c1f7,#b69bdd,#cd84d8,#ed86b4', '#ed7086,#f9b957,#fff570,#87d486,#4dcaa5,#5be0df,#669cf5,#9870cf,#b559ca,#e75796', '#e8405f,#f5a62c,#fff556,#6ac969,#2fbc92,#33d8d5,#3a79f3,#7c4bbf,#a431b9,#e32b7c', '#a81b36,#ee7c05,#f7c12d,#40a244,#0f765c,#0caaa6,#1d45cd,#5121a7,#7b07a0,#b90060', '#77102a,#e04a03,#ee7e18,#217022,#04402c,#08716a,#0f3099,#330d91,#4b0088,#800050'];
const fill = (id, rows) => {
  document.getElementById(id).innerHTML = rows.join(',').split(',').map(c =>
    `<button aria-label="${c}" class="${c === '#2f5cf4' ? 'on' : c === '#fff240' ? 'near' : ''}" style="background:${c}"></button>`).join('');
};
fill('base', base);
fill('shades', shades);
```
